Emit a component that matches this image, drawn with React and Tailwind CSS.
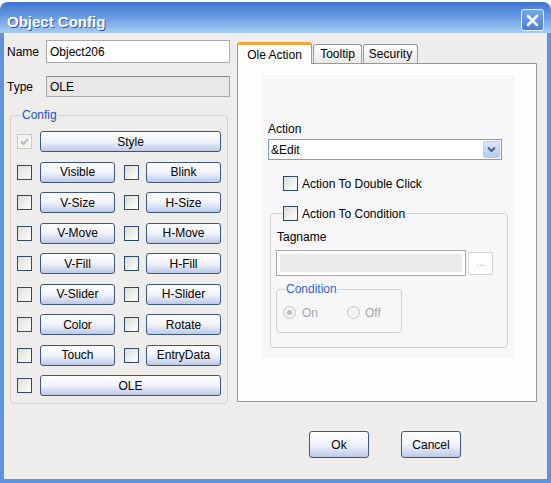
import React from 'react';

// small XP style widgets used by the dialog
const Check = ({ disabled, checked }) => (
	<div
		className={
			disabled
				? 'w-[15px] h-[15px] shrink-0 border border-[#C9C9C2] bg-[#F4F4F0] flex items-center justify-center'
				: 'w-[15px] h-[15px] shrink-0 border border-[#2F4C6E] bg-linear-to-br from-[#DCDCD6] to-white'
		}
	>
		{checked && (
			<svg width="11" height="11" viewBox="0 0 11 11">
				<path d="M2 5.5 L4.5 8 L9 3" fill="none" stroke="#B8B8B2" strokeWidth="2" />
			</svg>
		)}
	</div>
);

const Btn = ({ children, w, h = 'h-[21px]' }) => (
	<div
		className={`${w} ${h} shrink-0 flex items-center justify-center rounded-[3px] border border-[#3B5782] bg-linear-to-b from-white via-[#F0F3FB] to-[#BCC9E8] text-black`}
	>
		{children}
	</div>
);

const Radio = ({ on }) => (
	<div className="w-[13px] h-[13px] rounded-full border border-[#C4C4BE] bg-[#F3F3F1] flex items-center justify-center">
		{on && <div className="w-[5px] h-[5px] rounded-full bg-[#BDBDB8]" />}
	</div>
);

const Row = ({ a, b }) => (
	<div className="flex items-center h-[21px]">
		<Check />
		<div className="w-[8px]" />
		<Btn w="w-[75px]">{a}</Btn>
		<div className="w-[9px]" />
		<Check />
		<div className="w-[7px]" />
		<Btn w="w-[75px]">{b}</Btn>
	</div>
);

const App = () => {
	return (
		<div className="w-[551px] h-[483px] flex flex-col bg-white font-['Liberation_Sans',Arial,sans-serif] text-[12px] text-black leading-[14px]">
			{/* title bar */}
			<div className="h-[31px] mt-[2px] rounded-t-[8px] bg-linear-to-b from-[#3F74D1] via-[#6A9DE3] to-[#A8CCF3] flex items-start justify-between pl-[7px] pr-[7px]">
				<span className="mt-[11px] text-white font-bold text-[15px] leading-[17px] [text-shadow:1px_1px_0_#2d5aa8]">
					Object Config
				</span>
				<div className="mt-[7px] w-[23px] h-[22px] rounded-[3px] border border-[#E8F0FC] bg-linear-to-b from-[#7AA6EC] to-[#4A7FDA] flex items-center justify-center">
					<svg width="13" height="13" viewBox="0 0 13 13">
						<path d="M2 2 L11 11 M11 2 L2 11" stroke="white" strokeWidth="2.6" strokeLinecap="round" />
					</svg>
				</div>
			</div>

			{/* body */}
			<div className="flex-1 flex flex-col border-x-4 border-b-4 border-[#5E93E0] bg-[#EFECEC]">
				<div className="flex">
					{/* left column */}
					<div className="w-[230px] flex flex-col pl-[3px]">
						<div className="flex items-center mt-[7px] h-[23px]">
							<span className="w-[39px]">Name</span>
							<div className="w-[184px] h-[23px] bg-white border border-[#A9A9A9] flex items-center pl-[3px]">
								Object206
							</div>
						</div>
						<div className="flex items-center mt-[13px] h-[21px]">
							<span className="w-[39px]">Type</span>
							<div className="w-[184px] h-[21px] bg-[#E9E7E7] border border-[#A9A9A9] border-t-[#8C8C8C] flex items-center pl-[3px]">
								OLE
							</div>
						</div>
						<fieldset className="ml-[3px] mt-[11px] w-[218px] border border-[#D3D0C6] rounded-[4px] pl-[6px] pr-[6px] pb-[7px]">
							<legend className="ml-[4px] px-[1px] text-[#2154C6]">Config</legend>
							<div className="flex flex-col gap-[9.5px] pt-[9px]">
								<div className="flex items-center h-[21px]">
									<Check disabled checked />
									<div className="w-[8px]" />
									<Btn w="w-[181px]">Style</Btn>
								</div>
								<Row a="Visible" b="Blink" />
								<Row a="V-Size" b="H-Size" />
								<Row a="V-Move" b="H-Move" />
								<Row a="V-Fill" b="H-Fill" />
								<Row a="V-Slider" b="H-Slider" />
								<Row a="Color" b="Rotate" />
								<Row a="Touch" b="EntryData" />
								<div className="flex items-center h-[21px]">
									<Check />
									<div className="w-[8px]" />
									<Btn w="w-[181px]">OLE</Btn>
								</div>
							</div>
						</fieldset>
					</div>

					{/* right column: tabs */}
					<div className="ml-[3px] flex flex-col mt-[9px]">
						<div className="flex items-end h-[21px] gap-[1px]">
							<div className="relative z-10 -mb-px w-[75px] h-[22px] bg-white border-x border-[#919B9C] border-t-[3px] border-t-[#F2A53A] rounded-t-[3px] flex items-center justify-center">
								Ole Action
							</div>
							<div className="w-[49px] h-[19px] border-x border-t border-[#919B9C] rounded-t-[3px] bg-linear-to-b from-white to-[#E8E8E4] flex items-center justify-center">
								Tooltip
							</div>
							<div className="w-[55px] h-[19px] border-x border-t border-[#919B9C] rounded-t-[3px] bg-linear-to-b from-white to-[#E8E8E4] flex items-center justify-center">
								Security
							</div>
						</div>
						<div className="w-[300px] h-[339px] border border-[#919B9C] bg-[#FDFDFD] pl-[24px] pt-[11px]">
							<div className="w-[253px] h-[284px] bg-[#F7F7FA] flex flex-col">
								<span className="ml-[6px] mt-[47px]">Action</span>
								<div className="ml-[6px] mt-[3px] w-[234px] h-[21px] bg-white border border-[#7F9DB9] flex items-center justify-between pl-[2px] pr-[1px]">
									<span>&amp;Edit</span>
									<div className="w-[17px] h-[17px] rounded-[2px] border border-[#B8CAF0] bg-linear-to-b from-[#DCE7FC] to-[#B4C9F2] flex items-center justify-center">
										<svg width="9" height="7" viewBox="0 0 9 7">
											<path d="M1 1.5 L4.5 5 L8 1.5" fill="none" stroke="#4D6185" strokeWidth="2" />
										</svg>
									</div>
								</div>
								<div className="ml-[21px] mt-[16px] flex items-center gap-[4px] h-[15px]">
									<Check />
									<span>Action To Double Click</span>
								</div>
								<fieldset className="ml-[8px] mt-[15px] w-[238px] border border-[#D3D0C6] rounded-[4px] px-[6px] pb-[14px]">
									<legend className="ml-[6px] pr-[2px] flex items-center gap-[4px] h-[15px]">
										<Check />
										<span>Action To Condition</span>
									</legend>
									<div className="mt-[9px] h-[14px]">Tagname</div>
									<div className="mt-[6px] -ml-px flex items-center gap-[2px]">
										<div className="w-[190px] h-[26px] border border-[#A9A9A9] bg-white p-[3px]">
											<div className="w-full h-full bg-[#ECEAEA]" />
										</div>
										<div className="w-[25px] h-[23px] border border-[#D6D6D6] bg-white flex items-center justify-center text-[#A5A5A5] text-[10px] leading-[10px]">
											...
										</div>
									</div>
									<fieldset className="-ml-px mt-[6px] w-[126px] border border-[#D3D0C6] rounded-[4px] px-[6px] pb-[13px]">
										<legend className="ml-[2px] px-[1px] text-[#3A5FC7]">Condition</legend>
										<div className="pt-[10px] flex items-center h-[23px]">
											<Radio on />
											<span className="ml-[6px] text-[#A6A6A6] w-[45px]">On</span>
											<Radio />
											<span className="ml-[5px] text-[#A6A6A6]">Off</span>
										</div>
									</fieldset>
								</fieldset>
							</div>
						</div>
					</div>
				</div>

				{/* bottom buttons */}
				<div className="flex pl-[305px] mt-[27px] gap-[32px]">
					<Btn w="w-[60px]" h="h-[27px]">Ok</Btn>
					<Btn w="w-[60px]" h="h-[27px]">Cancel</Btn>
				</div>
			</div>
		</div>
	);
};

export default App;
